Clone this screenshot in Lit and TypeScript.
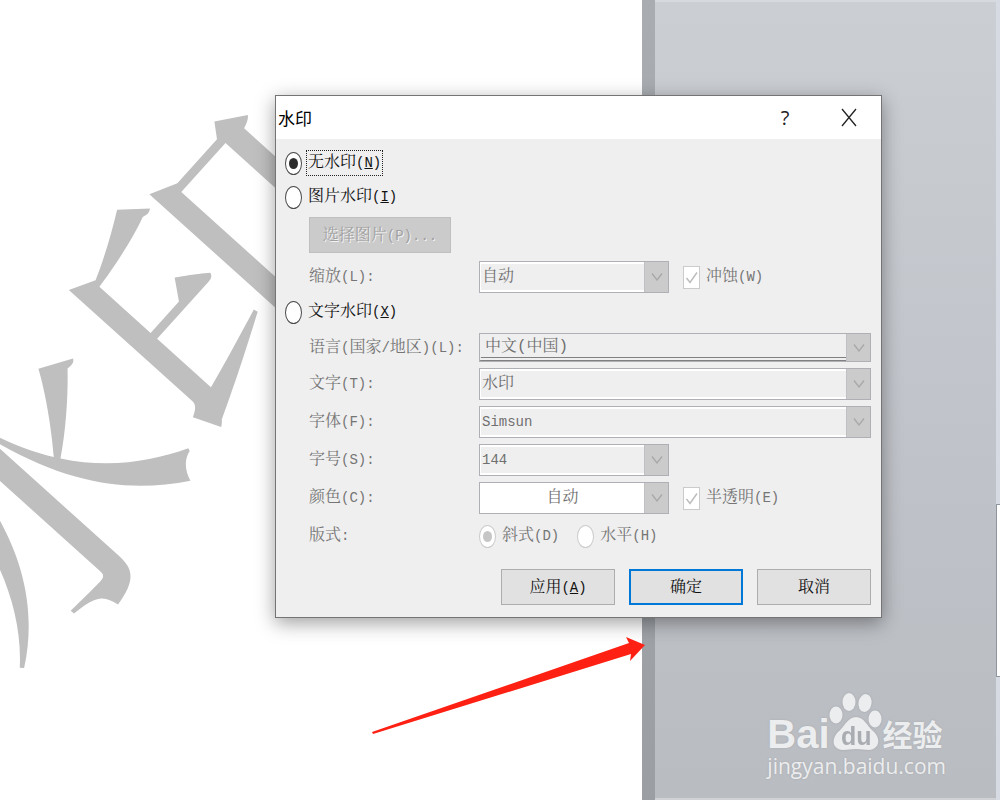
import { LitElement, html, css, svg } from "lit";
import { customElement, property } from "lit/decorators.js";
import { classMap } from "lit/directives/class-map.js";

const sharedText = css`
  :host {
    font-family: "Liberation Mono", "Noto Serif CJK SC", "Noto Sans CJK SC", monospace;
    font-size: 16px;
    line-height: 24px;
  }
  .latin {
    font-size: 14px;
  }
`;

/** Sets the half-width part of a caption smaller than its hanzi. */
const caption = (text: string) =>
  text
    .split(/([\x20-\x7e]+)/)
    .filter(Boolean)
    .map((part) => {
      if (!/^[\x20-\x7e]/.test(part)) return part;
      return html`<span class="latin">${part}</span>`;
    });

/** A caption that ends in an underlined access key, e.g. 应用(A). */
const withKey = (text: string, key: string) =>
  html`${text}<span class="latin">(<u>${key}</u>)</span>`;

@customElement("combo-field")
class ComboField extends LitElement {
  @property() label = "";
  @property() value = "";
  @property() kind = "";
  @property({ type: Boolean }) wide = false;

  static styles = [
    sharedText,
    css`
      :host {
        display: block;
      }
      .row {
        display: grid;
        grid-template-columns: 170px minmax(0, 1fr);
        align-items: center;
      }
      .label {
        color: #757575;
        white-space: nowrap;
      }
      .side {
        display: flex;
        align-items: center;
        gap: 14px;
      }
      .combo {
        display: grid;
        grid-template-columns: minmax(0, 1fr) 24px;
        flex: 0 0 190px;
        height: 32px;
        box-sizing: border-box;
        border: 1px solid #afafb6;
        background: #fff;
      }
      .wide {
        flex: 1;
      }
      .language {
        height: 29px;
      }
      .select {
        appearance: none;
        min-width: 0;
        margin: 0;
        padding: 0 1px;
        border: 2px solid #fff;
        border-width: 2px 0 2px 1px;
        border-radius: 0;
        background: #efefef;
        color: #6f6f6f;
        font: inherit;
        line-height: 24px;
        opacity: 1;
      }
      .select.ascii {
        font-size: 14px;
      }
      .language .select {
        padding: 0 4px;
        border-color: #efefef;
        border-bottom: 4px double #808080;
        line-height: 20px;
      }
      .color .select {
        background: #fff;
        text-align: center;
        text-align-last: center;
      }
      .arrow {
        display: grid;
        place-items: center;
        background: #cbcbcb;
        border-left: 1px solid #c0c0c4;
      }
      .arrow svg {
        width: 12px;
        height: 8px;
        fill: none;
        stroke: #a8a8a8;
        stroke-width: 1.3;
      }
    `,
  ];

  render() {
    return html`<div class="row">
      <label class="label" for="box">${caption(this.label)}</label>
      <div class="side">
        <div
          class=${classMap({
            combo: true,
            wide: this.wide,
            language: this.kind === "language",
            color: this.kind === "color",
          })}
        >
          <select
            id="box"
            class=${classMap({ select: true, ascii: /^[\w]+$/.test(this.value) })}
            disabled
          >
            <option>${this.value}</option>
          </select>
          <span class="arrow">
            <svg viewBox="0 0 12 8"><path d="M1 .5 6 7 11 .5" /></svg>
          </span>
        </div>
        <slot></slot>
      </div>
    </div>`;
  }
}

@customElement("check-mark")
class CheckMark extends LitElement {
  @property() label = "";

  static styles = [
    sharedText,
    css`
      .check {
        display: flex;
        align-items: center;
        gap: 6px;
        color: #757575;
      }
      .box {
        display: grid;
      }
      .input,
      .tick {
        grid-area: 1 / 1;
        width: 17px;
        height: 23px;
      }
      .input {
        appearance: none;
        box-sizing: border-box;
        margin: 0;
        border: 1px solid #cbcbcb;
        background: #fff;
      }
      .tick {
        fill: none;
        stroke: #bdbdbd;
        stroke-width: 1.5;
      }
    `,
  ];

  render() {
    return html`<label class="check">
      <span class="box">
        <input class="input" type="checkbox" checked disabled />
        <svg class="tick" viewBox="0 0 17 23"><path d="M3.5 12 7 16.5 14 6.5" /></svg>
      </span>
      <span>${caption(this.label)}</span>
    </label>`;
  }
}

@customElement("watermark-dialog")
class WatermarkDialog extends LitElement {
  static styles = [
    sharedText,
    css`
      :host {
        display: block;
        box-sizing: border-box;
        border: 1px solid #747474;
        background: #efefef;
        box-shadow: 0 5px 18px rgba(0, 0, 0, 0.38);
        color: #111;
      }
      .titlebar {
        display: flex;
        align-items: center;
        height: 43px;
        padding-left: 2px;
        background: #fff;
      }
      .title {
        flex: 1;
        margin: 0;
        font: 400 17px/24px "Noto Sans CJK SC", sans-serif;
        color: #000;
      }
      .tool {
        display: grid;
        place-items: center;
        width: 64px;
        height: 43px;
        padding: 0;
        border: 0;
        background: none;
        color: #222;
        font: 400 20px/24px "Open Sans", sans-serif;
      }
      .tool svg {
        width: 16px;
        height: 20px;
        fill: none;
        stroke: #222;
        stroke-width: 1.3;
      }
      .form {
        display: flex;
        flex-direction: column;
        padding: 7px 10px 12px 9px;
      }
      .choice {
        display: flex;
        align-items: center;
        gap: 4px;
        height: 34px;
      }
      .radio {
        appearance: none;
        display: grid;
        place-items: center;
        flex: none;
        box-sizing: border-box;
        width: 17px;
        height: 23px;
        margin: 0;
        border: 1px solid #4a4a4a;
        border-radius: 50%;
        background: #fff;
      }
      .radio:checked::before {
        content: "";
        width: 9px;
        height: 11px;
        border-radius: 50%;
        background: #2b2b2b;
      }
      .radio:disabled {
        border-color: #cbcbcb;
      }
      .radio:disabled:checked::before {
        background: #c6c6c6;
      }
      .text {
        padding: 0 1px;
        border: 1px solid transparent;
      }
      .focused {
        border: 1px dotted #222;
      }
      .group {
        display: flex;
        flex-direction: column;
        gap: 6px;
        padding-left: 24px;
      }
      .picture {
        padding-top: 3px;
        padding-bottom: 2px;
        gap: 8px;
      }
      .words {
        padding-top: 4px;
      }
      .button {
        box-sizing: border-box;
        width: 114px;
        height: 36px;
        padding: 2px 0 0;
        border: 1px solid #adadad;
        border-radius: 0;
        background: #e1e1e1;
        color: #111;
        font: inherit;
      }
      .default {
        border: 2px solid #0078d7;
      }
      .pick {
        width: 142px;
        border-color: #bfbfbf;
        background: #cbcbcb;
        color: #a0a0a0;
        text-shadow: 1px 1px 0 #f4f4f4;
      }
      .layout {
        display: grid;
        grid-template-columns: 170px minmax(0, 1fr);
        align-items: center;
        margin: 0;
        height: 32px;
        color: #757575;
      }
      .options {
        display: flex;
        gap: 16px;
      }
      .options .choice {
        height: 32px;
      }
      .footer {
        display: flex;
        justify-content: flex-end;
        gap: 14px;
        padding-top: 17px;
      }
    `,
  ];

  private choice(text: string, key: string, checked = false) {
    return html`<label class="choice">
      <input class="radio" type="radio" name="mode" ?checked=${checked} />
      <span class=${classMap({ text: true, focused: checked })}>${withKey(text, key)}</span>
    </label>`;
  }

  private layoutOption(text: string, checked = false) {
    return html`<label class="choice">
      <input class="radio" type="radio" name="layout" disabled ?checked=${checked} />
      <span class="text">${caption(text)}</span>
    </label>`;
  }

  render() {
    return html`
      <header class="titlebar">
        <h1 class="title">水印</h1>
        <button class="tool" type="button">?</button>
        <button class="tool" type="button" aria-label="关闭">
          <svg viewBox="0 0 16 20"><path d="M1 1 15 18M15 1 1 18" /></svg>
        </button>
      </header>
      <form class="form">
        ${this.choice("无水印", "N", true)} ${this.choice("图片水印", "I")}
        <div class="group picture">
          <button class="button pick" type="button" disabled>
            ${caption("选择图片(P)...")}
          </button>
          <combo-field label="缩放(L):" value="自动">
            <check-mark label="冲蚀(W)"></check-mark>
          </combo-field>
        </div>
        ${this.choice("文字水印", "X")}
        <div class="group words">
          <combo-field label="语言(国家/地区)(L):" value="中文(中国)" kind="language" wide></combo-field>
          <combo-field label="文字(T):" value="水印" wide></combo-field>
          <combo-field label="字体(F):" value="Simsun" wide></combo-field>
          <combo-field label="字号(S):" value="144"></combo-field>
          <combo-field label="颜色(C):" value="自动" kind="color">
            <check-mark label="半透明(E)"></check-mark>
          </combo-field>
          <div class="layout" role="radiogroup" aria-labelledby="layout-label">
            <span id="layout-label">${caption("版式:")}</span>
            <div class="options">
              ${this.layoutOption("斜式(D)", true)} ${this.layoutOption("水平(H)")}
            </div>
          </div>
        </div>
        <footer class="footer">
          <button class="button" type="button">${withKey("应用", "A")}</button>
          <button class="button default" type="button">确定</button>
          <button class="button" type="button">取消</button>
        </footer>
      </form>
    `;
  }
}

@customElement("baidu-mark")
class BaiduMark extends LitElement {
  static styles = css`
    :host {
      display: block;
      color: #ecedee;
      text-shadow: 0 0 2px #a4a7ac;
      white-space: nowrap;
    }
    .brand {
      display: flex;
      align-items: flex-end;
    }
    .bai {
      font: 700 40px/44px "Liberation Sans", sans-serif;
    }
    .paw {
      width: 50px;
      height: 58px;
      overflow: visible;
      margin: 0 0 6px -1px;
      filter: drop-shadow(0 0 1px #a4a7ac);
    }
    .du {
      font: 700 25px "Liberation Sans", sans-serif;
      fill: #a9acb1;
      text-shadow: none;
    }
    .name {
      margin-left: 4px;
      font: 700 30px/46px "Noto Sans CJK SC", sans-serif;
    }
    .site {
      margin-top: -2px;
      font: 400 21px/24px "Open Sans", sans-serif;
    }
  `;

  render() {
    return html`
      <div class="brand">
        <span class="bai">Bai</span>
        <svg class="paw" viewBox="0 0 50 58" fill="#ecedee">
          <ellipse cx="7" cy="23" rx="6.5" ry="8.5" />
          <ellipse cx="20" cy="10" rx="6.5" ry="9" />
          <ellipse cx="36" cy="11" rx="6.5" ry="9" transform="rotate(10 36 11)" />
          <ellipse cx="46" cy="27" rx="6.5" ry="8.5" />
          <path
            d="M27 25C35 25 38 34 44 39C52 46 51 57 40 58C35 58 32 57 27 57C22 57 19 58 14 58C2 57 3 46 9 40C16 34 19 25 27 25Z"
          />
          ${svg`<text class="du" x="12" y="53">du</text>`}
        </svg>
        <span class="name">经验</span>
      </div>
      <div class="site">jingyan.baidu.com</div>
    `;
  }
}

@customElement("app-root")
class AppRoot extends LitElement {
  static styles = css`
    :host {
      display: block;
    }
    .desktop {
      position: relative;
      display: flex;
      height: 100vh;
      overflow: hidden;
      background: #fff;
    }
    .page {
      flex: 0 0 64.2%;
      background: #fff;
    }
    .edge {
      flex: 0 0 13px;
      background: linear-gradient(#a9adb1, #9b9fa4);
    }
    .workspace {
      flex: 1;
      border-top: 2px solid #d6d9dd;
      border-bottom: 2px solid #cfd1d4;
      background: linear-gradient(#cbced3, #bfc2c8 60%, #b9bcc1);
    }
    .scrollbar {
      display: flex;
      flex-direction: column;
      flex: 0 0 4px;
      background: #d5dae3;
    }
    .before {
      flex: 505;
    }
    .thumb {
      flex: 172;
      border: 1px solid #8f959c;
      border-right: 0;
      background: #fff;
    }
    .after {
      flex: 123;
    }
    .stamp {
      position: absolute;
      left: -179px;
      top: 217px;
      width: 600px;
      text-align: center;
      font: 500 292px/320px "Noto Serif CJK SC", "Noto Sans CJK SC", serif;
      color: #bfbfbf;
      transform: rotate(-48deg);
    }
    .arrow {
      position: absolute;
      left: 371px;
      top: 636px;
      width: 274px;
      height: 98px;
      fill: #ff2014;
    }
    .dialog {
      position: absolute;
      left: 275px;
      top: 95px;
      width: 607px;
    }
    .credit {
      position: absolute;
      right: 54px;
      bottom: 22px;
    }
  `;

  render() {
    return html`<main class="desktop">
      <section class="page"></section>
      <div class="edge"></div>
      <div class="workspace"></div>
      <div class="scrollbar">
        <span class="before"></span><span class="thumb"></span><span class="after"></span>
      </div>
      <div class="stamp">水印</div>
      <watermark-dialog class="dialog" role="dialog" aria-label="水印"></watermark-dialog>
      <svg class="arrow" viewBox="0 0 274 98">
        <path d="M1 96 258 7 255 1 274 9 259 25 260 18 2 98Z" />
      </svg>
      <baidu-mark class="credit"></baidu-mark>
    </main>`;
  }
}
